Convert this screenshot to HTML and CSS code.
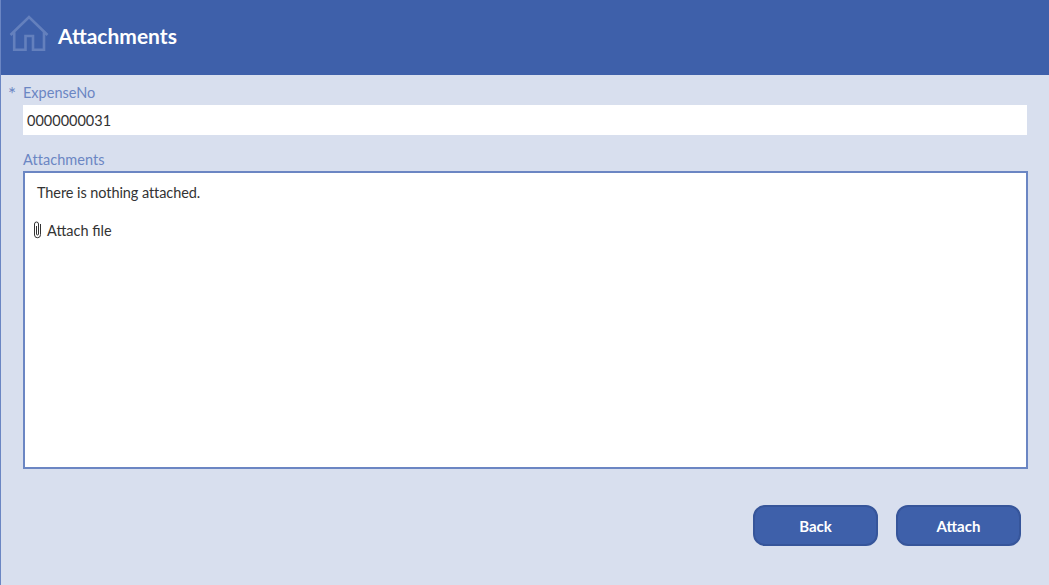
FILE: index.html
```html
<!DOCTYPE html>
<html lang="en">
<head>
<meta charset="utf-8">
<title>Attachments</title>
<link rel="stylesheet" href="styles.css">
</head>
<body>
<div class="screen">
  <header class="header">
    <svg class="home" viewBox="0 0 40 38" width="40" height="38" aria-hidden="true"><path d="M1.500 20L20 2L38.500 20M5.200 17V34.800H16.500V21H24V34.800H35V17"/></svg>
    <h1 class="title">Attachments</h1>
  </header>
  <main class="form">
    <div class="label-row"><span class="required">*</span><div class="label">ExpenseNo</div></div>
    <div class="field">0000000031</div>
    <div class="label second">Attachments</div>
    <section class="attachments">
      <p class="empty">There is nothing attached.</p>
      <div class="attach-file">
        <svg class="clip" viewBox="0 0 10 18" width="10" height="18" aria-hidden="true"><path d="M7.500 3V13.500A3 3 0 0 1 1.500 14V3A2 2 0 0 1 5.500 3V13A1 1 0 0 1 3.500 13V5"/></svg>
        <span class="attach-text">Attach file</span>
      </div>
    </section>
    <div class="actions">
      <button class="button">Back</button>
      <button class="button">Attach</button>
    </div>
  </main>
</div>
</body>
</html>
```
FILE: styles.css
```css
* { box-sizing: border-box; }
body { margin: 0; font-family: Lato, sans-serif; font-size: 14.5px; color: #333; }
.screen { height: 585px; background: #d8dfee; border-left: 1px solid #6b86c3; overflow: hidden; }
.header { display: flex; align-items: center; height: 75px; padding: 0 8px 3px; background: #3e60aa; }
.home { fill: none; stroke: #6480bd; stroke-width: 2.6; margin-top: -4px; }
.title { margin: 0 0 0 9px; font-size: 21px; line-height: 26px; font-weight: 700; color: #fff; }
.form { padding: 8px 22px 0; }
.label-row { display: flex; margin-left: -15px; height: 22px; }
.required { width: 15px; color: #6b86c3; font-size: 19px; line-height: 22px; }
.label { color: #6b86c3; line-height: 19px; }
.field { height: 30px; padding: 0 4px; line-height: 31px; background: #fff; }
.second { margin-top: 15px; height: 21px; letter-spacing: 0.05px; }
.attachments { height: 298px; margin-right: -1px; border: 2px solid #6b86c3; background: #fff; padding: 10px 8px; }
.empty { margin: 0 0 0 4px; letter-spacing: -0.08px; line-height: 19px; }
.attach-file { display: flex; align-items: center; gap: 4px; margin-top: 18px; height: 20px; }
.attach-text { line-height: 18px; margin-top: 2px; }
.clip { fill: none; stroke: #333; stroke-width: 1; }
.actions { display: flex; justify-content: flex-end; gap: 18px; margin-top: 36px; padding-right: 6px; }
.button { width: 125px; height: 41px; border: 2px solid #36559a; border-radius: 12px; background: #3e60aa; color: #fff; font: 700 15px Lato, sans-serif; padding: 0; }
```
